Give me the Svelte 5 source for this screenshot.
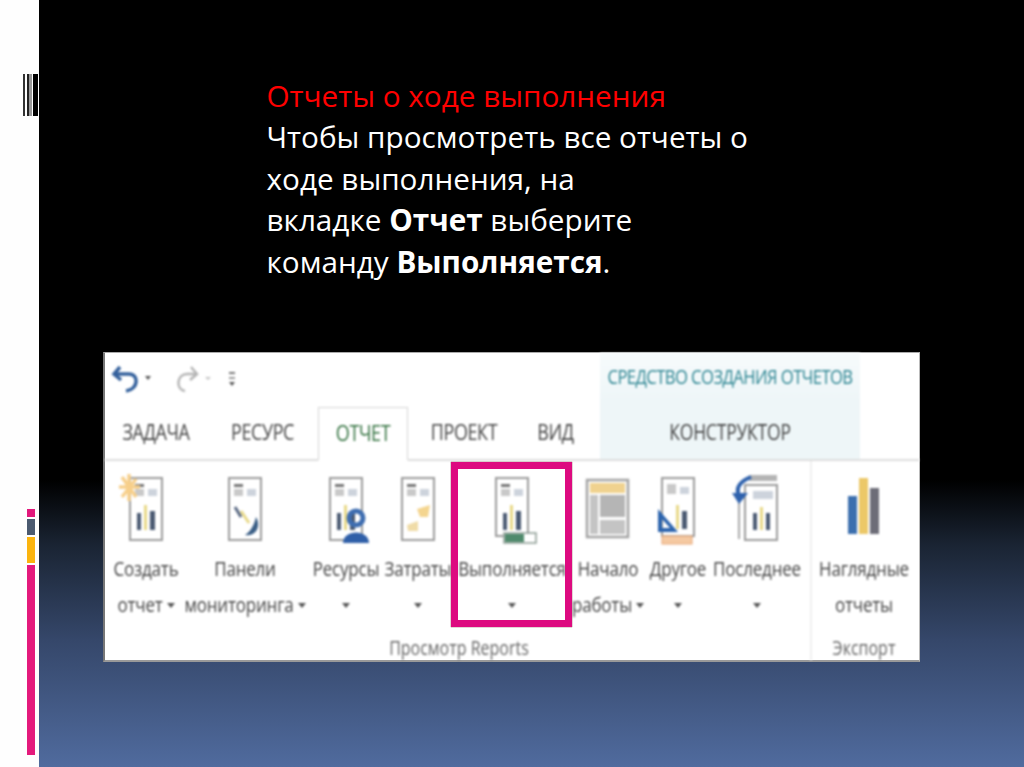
<script>
  const items = [
    { lines: ['Создать', 'отчет'], caret: 'inline', w: 'w76', icon: 'create' },
    { lines: ['Панели', 'мониторинга'], caret: 'inline', w: 'w122', icon: 'panel' },
    { lines: ['Ресурсы'], caret: 'below', w: 'w80', icon: 'res' },
    { lines: ['Затраты'], caret: 'below', w: 'w64', icon: 'cost' },
    { lines: ['Выполняется'], caret: 'below', w: 'w124', icon: 'prog' },
    { lines: ['Начало', 'работы'], caret: 'inline', w: 'w68', icon: 'start' },
    { lines: ['Другое'], caret: 'below', w: 'w72', icon: 'other' },
    { lines: ['Последнее'], caret: 'below', w: 'w86', icon: 'recent' }
  ];
</script>

{#snippet doc()}
  <rect x="14" y="5" width="32" height="62" fill="#fff" stroke="#9b9b9b" stroke-width="2" />
  <rect x="19" y="11" width="9" height="3" fill="#777" />
  <rect x="19" y="16" width="9" height="7" fill="#c9c9c9" />
  <rect x="32" y="16" width="9" height="7" fill="#cdd3dc" />
{/snippet}

{#snippet bars()}
  <rect x="21" y="40" width="4" height="17" fill="#4b5a72" />
  <rect x="28" y="32" width="3" height="25" fill="#e8d98a" />
  <rect x="34" y="38" width="5" height="19" fill="#4b5a72" />
{/snippet}

{#snippet icon(kind)}
  <svg class="ico" viewBox="0 0 60 72" width="60" height="72" aria-hidden="true">
    {#if kind === 'create'}
      {@render doc()}{@render bars()}
      <path d="M6 4 L20 24 M20 6 L6 24 M3 14 H24 M13 1 V28" stroke="#f7cf8a" stroke-width="3.5" />
    {:else if kind === 'panel'}
      {@render doc()}
      <path d="M20 34 L26 44" stroke="#5c6b85" stroke-width="3" />
      <path d="M26 38 L34 50" stroke="#e8d98a" stroke-width="3" />
      <path d="M41 44 C46 52 42 64 30 62 C36 58 39 52 41 44 Z" fill="#3b5f86" />
    {:else if kind === 'res'}
      {@render doc()}{@render bars()}
      <circle cx="40" cy="45" r="7" fill="none" stroke="#3e6db0" stroke-width="5" />
      <path d="M27 70 C27 56 53 56 53 70 Z" fill="#2f5fa8" />
    {:else if kind === 'cost'}
      {@render doc()}
      <path d="M29 36 L42 32 L40 44 L32 44 Z" fill="#f4d58f" />
      <path d="M19 52 L30 48 L30 58 L20 58 Z" fill="#f0dca8" />
    {:else if kind === 'prog'}
      <rect x="14" y="5" width="32" height="58" fill="#fff" stroke="#9b9b9b" stroke-width="2" />
      <rect x="19" y="11" width="9" height="3" fill="#777" />
      <rect x="19" y="16" width="9" height="7" fill="#c9c9c9" />
      <rect x="32" y="16" width="9" height="7" fill="#cdd3dc" />
      {@render bars()}
      <rect x="22" y="60" width="32" height="10" fill="#fff" stroke="#8a9a92" stroke-width="1.5" />
      <rect x="23" y="61" width="19" height="8" fill="#4f8a6c" />
    {:else if kind === 'start'}
      <rect x="9" y="7" width="41" height="57" fill="#fff" stroke="#a3a3a3" stroke-width="2.5" />
      <rect x="12" y="10" width="35" height="10" fill="#f0d28f" />
      <rect x="12" y="22" width="8" height="39" fill="#c4c4c4" />
      <rect x="22" y="22" width="25" height="22" fill="#b5b5b5" />
      <rect x="22" y="47" width="25" height="14" fill="#c4c4c4" />
    {:else if kind === 'other'}
      <rect x="14" y="5" width="32" height="58" fill="#fff" stroke="#9b9b9b" stroke-width="2" />
      <rect x="19" y="11" width="9" height="10" fill="#c9c9c9" />
      <rect x="32" y="14" width="9" height="7" fill="#cdd3dc" />
      <rect x="28" y="32" width="3" height="24" fill="#e8d98a" />
      <rect x="34" y="38" width="5" height="18" fill="#4b5a72" />
      <path d="M10 36 L30 59 H10 Z M14 46 V55 H22 Z" fill="#2c64ae" fill-rule="evenodd" />
      <rect x="14" y="63" width="30" height="8" fill="#f5c9a2" stroke="#e8a878" />
    {:else if kind === 'recent'}
      <rect x="22" y="2" width="28" height="6" fill="#b4b4b4" />
      <rect x="18" y="12" width="32" height="55" fill="#fff" stroke="#9b9b9b" stroke-width="2" />
      <path d="M12 14 V66" stroke="#a9a9a9" stroke-width="2" />
      <rect x="26" y="40" width="4" height="17" fill="#4b5a72" />
      <rect x="33" y="34" width="3" height="23" fill="#e8d98a" />
      <rect x="39" y="40" width="4" height="17" fill="#4b5a72" />
      <path d="M24 4 C14 8 8 14 12 23" fill="none" stroke="#2f62ad" stroke-width="4" />
      <path d="M5 20 H21 L12 31 Z" fill="#2f62ad" />
      <rect x="26" y="18" width="20" height="8" fill="#cdd3dc" />
    {:else if kind === 'chart'}
      <rect x="14" y="23" width="9" height="38" fill="#3c6fae" />
      <rect x="25" y="5" width="9" height="56" fill="#ecc868" />
      <rect x="36" y="15" width="9" height="46" fill="#6d6d78" />
    {/if}
  </svg>
{/snippet}

<div class="slide">
  <aside class="strip">
    <div class="barcode">
      <i class="b1"></i><i class="b2"></i><i class="b4"></i>
    </div>
    <div class="blocks">
      <i class="pink-s"></i><i class="slate"></i><i class="amber"></i><i class="pink-l"></i>
    </div>
  </aside>

  <main class="stage">
    <p class="copy">
      <span class="red">Отчеты о ходе выполнения</span><br />
      Чтобы просмотреть все отчеты о<br />
      ходе выполнения, на<br />
      вкладке <b>Отчет</b> выберите<br />
      команду <b>Выполняется</b>.
    </p>

    <section class="ribbon">
      <div class="soft">
        <header class="head">
          <div class="left-head">
            <div class="qat">
              <svg viewBox="0 0 130 40" width="130" height="40" aria-hidden="true">
                <path d="M11 8 L5 15 L12 21" fill="none" stroke="#33609c" stroke-width="3.5" />
                <path d="M6 15 H20 C30 15 30 30 17 32" fill="none" stroke="#33609c" stroke-width="3.5" />
                <path d="M36 17 h6 l-3 4 Z" fill="#555" />
                <path d="M82 8 L88 15 L81 21" fill="none" stroke="#b5b5b5" stroke-width="2.5" />
                <path d="M87 15 H78 C68 15 66 30 76 32" fill="none" stroke="#b5b5b5" stroke-width="2.5" />
                <path d="M96 18 h6 l-3 3 Z" fill="#c4c4c4" />
                <rect x="120" y="13" width="6" height="2" fill="#777" />
                <rect x="120" y="18" width="6" height="2" fill="#999" />
                <path d="M120 23 h6 l-3 4 Z" fill="#555" />
              </svg>
            </div>
            <nav class="tabs">
              <span class="tab t-zad"><em>ЗАДАЧА</em></span>
              <span class="tab t-res"><em>РЕСУРС</em></span>
              <span class="tab t-otch active"><em>ОТЧЕТ</em></span>
              <span class="tab t-proj"><em>ПРОЕКТ</em></span>
              <span class="tab t-vid"><em>ВИД</em></span>
            </nav>
          </div>
          <div class="context">
            <div class="ctx-title"><em>СРЕДСТВО СОЗДАНИЯ ОТЧЕТОВ</em></div>
            <div class="ctx-tab"><em>КОНСТРУКТОР</em></div>
          </div>
        </header>

        <div class="tools">
          <div class="group main-group">
            <div class="row">
              {#each items as it}
                <div class="item {it.w}">
                  {@render icon(it.icon)}
                  <div class="lab">
                    <em>{it.lines[0]}</em>
                  </div>
                  <div class="lab">
                    {#if it.lines[1]}<em>{it.lines[1]}</em>{/if}
                    <i class="caret"></i>
                  </div>
                </div>
              {/each}
            </div>
            <div class="glabel"><em>Просмотр Reports</em></div>
          </div>
          <div class="group side-group">
            <div class="row">
              <div class="item w104">
                {@render icon('chart')}
                <div class="lab"><em>Наглядные</em></div>
                <div class="lab"><em>отчеты</em></div>
              </div>
            </div>
            <div class="glabel"><em>Экспорт</em></div>
          </div>
        </div>
      </div>
      <div class="frame"></div>
    </section>
  </main>
</div>

<style>
  :global(body) {
    margin: 0;
    background: #fff;
  }
  .slide {
    display: flex;
    width: 1024px;
    height: 767px;
    overflow: hidden;
    font-family: "Open Sans", "Noto Sans", sans-serif;
  }
  .strip {
    width: 39px;
    flex: none;
    background: #fefefe;
    padding-top: 74px;
    box-sizing: border-box;
  }
  .barcode {
    display: flex;
    height: 42px;
    margin-left: 23px;
  }
  .barcode i { display: block; height: 100%; }
  .b1 { width: 1.5px; background: #333; margin-right: 2.5px; }
  .b2 { width: 1.5px; background: #222; border-right: 3px solid #999; margin-right: 1.5px; }
  .b4 { width: 5px; background: #000; }

  .blocks {
    display: flex;
    flex-direction: column;
    gap: 2px;
    margin: 393px 0 0 27px;
    width: 8px;
  }
  .blocks i { display: block; }
  .pink-s { height: 8px; background: #e2187c; }
  .slate { height: 16px; background: #4b5a70; }
  .amber { height: 26px; background: #fbb40e; }
  .pink-l { height: 190px; background: #e41a7c; }

  .stage {
    flex: 1;
    min-width: 0;
    padding-top: 75px;
    box-sizing: border-box;
    background: linear-gradient(180deg, #000 0, #000 480px, #1a2433 545px, #35476a 640px, #506b9e 767px);
  }
  .copy {
    margin: 0 0 70px 227.5px;
    color: #fff;
    font-size: 29.7px;
    line-height: 41.4px;
    white-space: nowrap;
  }
  .copy b { font-weight: 700; }
  .red { color: #f00; }

  .ribbon {
    position: relative;
    width: 817px;
    height: 310px;
    margin-left: 64px;
    background: #fff;
    box-sizing: border-box;
    border-bottom: 2px solid #999;
    border-left: 2px solid #777;
    border-right: 1px solid #bbb;
    border-top: 1px solid #aaa;
  }
  .soft {
    filter: blur(1px);
    color: #444;
  }
  em {
    font-style: normal;
    display: inline-block;
    transform: scaleY(1.2);
  }

  .head {
    display: flex;
    height: 106px;
  }
  .left-head { width: 495px; flex: none; }
  .qat { height: 47px; padding: 6px 0 0 4px; box-sizing: border-box; }
  .tabs {
    display: flex;
    align-items: flex-end;
    height: 59px;
    border-bottom: 2px solid #ddd;
    box-sizing: content-box;
    margin-bottom: -2px;
    font-size: 18px;
    letter-spacing: -0.4px;
  }
  .tab {
    height: 52px;
    display: flex;
    align-items: center;
    justify-content: center;
    box-sizing: border-box;
    padding-bottom: 2px;
    color: #444;
  }
  .t-zad { width: 102px; }
  .t-res { width: 111px; }
  .t-otch { width: 90px; }
  .t-proj { width: 112px; }
  .t-vid { width: 65px; margin-left: 3px; }
  .active {
    color: #2f6f3c;
    border: 1px solid #d5d5d5;
    border-bottom: 2px solid #fff;
    margin-bottom: -2px;
    height: 54px;
  }
  .context {
    width: 260px;
    flex: none;
    background: #eef6f8;
    text-align: center;
  }
  .ctx-title {
    background: linear-gradient(#f7fbfc, #eef6f8);
    height: 48px;
    line-height: 48px;
    color: #2c8592;
    font-size: 16.7px;
    letter-spacing: -0.6px;
    white-space: nowrap;
  }
  .ctx-tab {
    line-height: 62px;
    font-size: 17.5px;
    letter-spacing: -0.2px;
    color: #444;
  }

  .tools {
    display: flex;
    padding: 0 0 0 3px;
    border-top: 2px solid #ddd;
  }
  .group { display: flex; flex-direction: column; padding-top: 12px; }
  .main-group { width: 704px; flex: none; border-right: 2px solid #f0f0f0; box-sizing: border-box; }
  .side-group { width: 104px; flex: none; }
  .row { display: flex; height: 163px; }
  .item {
    display: flex;
    flex-direction: column;
    align-items: center;
    flex: none;
  }
  .ico { display: block; margin-bottom: 6px; overflow: visible; }
  .w76 { width: 76px; }
  .w122 { width: 122px; }
  .w80 { width: 80px; }
  .w64 { width: 64px; }
  .w124 { width: 124px; }
  .w68 { width: 68px; }
  .w72 { width: 72px; }
  .w86 { width: 86px; }
  .w104 { width: 104px; }

  .lab {
    height: 36px;
    line-height: 36px;
    font-size: 17px;
    letter-spacing: -0.2px;
    white-space: nowrap;
    display: flex;
    align-items: center;
    justify-content: center;
    gap: 4px;
    color: #444;
  }
  .caret {
    width: 0;
    height: 0;
    border-left: 4px solid transparent;
    border-right: 4px solid transparent;
    border-top: 5px solid #555;
  }
  .glabel {
    text-align: center;
    font-size: 16px;
    line-height: 24px;
    color: #666;
    white-space: nowrap;
  }
  .frame {
    position: absolute;
    left: 346px;
    top: 109px;
    width: 121px;
    height: 165px;
    box-sizing: border-box;
    border: 7px solid #dd0a80;
    box-shadow: 0 0 1px #500;
  }
</style>
